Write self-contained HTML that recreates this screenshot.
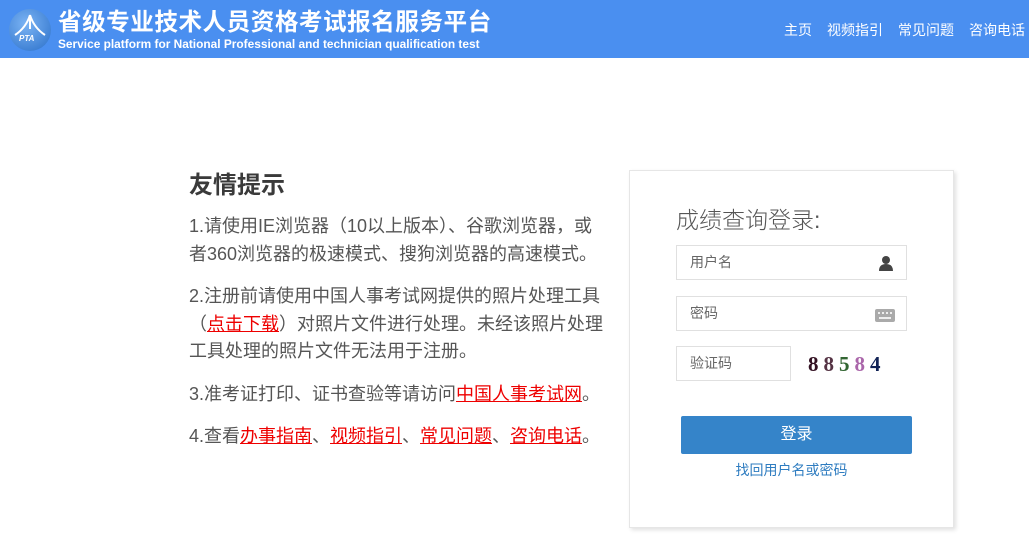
<!DOCTYPE html>
<html><head><meta charset="utf-8"><style>
*{margin:0;padding:0;box-sizing:border-box}
body{width:1029px;height:534px;overflow:hidden;background:#fff;font-family:"Liberation Sans","Noto Sans CJK SC",sans-serif;position:relative}
.hd{position:absolute;left:0;top:0;width:1029px;height:58px;background:#4a8ff0}
.logo{position:absolute;left:9px;top:9px;width:42px;height:42px;border-radius:50%;background:radial-gradient(circle at 40% 35%,#7bb4f4,#2a6fc9);}
.t1{position:absolute;left:58px;top:3px;color:#fff;font-size:23.6px;font-weight:bold;letter-spacing:0.5px;white-space:nowrap}
.t2{position:absolute;left:58px;top:37px;color:#fff;font-size:11.9px;font-weight:bold;white-space:nowrap}
.nav{position:absolute;top:20px;font-size:14px;color:#fff;white-space:nowrap}
.tip{position:absolute;left:189px;top:170px;width:440px;color:#444;white-space:nowrap}
.tip h2{font-size:24px;font-weight:bold;color:#3a3a3a;margin-bottom:11px;line-height:32px}
.tip p{font-size:18px;line-height:27.5px;margin-bottom:15px;color:#555}
.tip a{color:#e00;text-decoration:underline}
.box{position:absolute;left:629px;top:170px;width:325px;height:358px;border:1px solid #e6e6e6;box-shadow:2px 2px 4px rgba(0,0,0,.12);background:#fff}
.ttl{position:absolute;left:46px;top:30px;font-size:23px;color:#555;font-weight:300}
.in{position:absolute;border:1px solid #e0e0e0;height:35px;font-size:14px;color:#666;padding-left:13px;line-height:33px}
.btn{position:absolute;left:51px;top:245px;width:231px;height:38px;background:#3584c9;color:#fff;font-size:16px;text-align:center;line-height:38px;border-radius:2px}
.fg{position:absolute;left:0;width:100%;top:289px;text-align:center;font-size:14px;color:#2e7cc0}
.cap{position:absolute;left:178px;top:181px;font-family:"Liberation Serif",serif;font-size:21px;font-weight:bold;letter-spacing:5px}
</style></head><body>
<div class="hd">
<div class="logo"><svg width="42" height="42"><path d="M21 6 C18 16 12 22 6 26 M21 6 C24 16 30 22 36 26 M21 6 L21 20" stroke="#fff" stroke-width="2" fill="none"/><text x="10" y="32" font-size="8" fill="#fff" font-weight="bold" font-style="italic">PTA</text></svg></div>
<div class="t1">省级专业技术人员资格考试报名服务平台</div>
<div class="t2">Service platform for National Professional and technician qualification test</div>
<div class="nav" style="left:784px">主页</div>
<div class="nav" style="left:827px">视频指引</div>
<div class="nav" style="left:898px">常见问题</div>
<div class="nav" style="left:969px">咨询电话</div>
</div>
<div class="tip">
<h2>友情提示</h2>
<p>1.请使用IE浏览器（10以上版本）、谷歌浏览器，或<br>者360浏览器的极速模式、搜狗浏览器的高速模式。</p>
<p>2.注册前请使用中国人事考试网提供的照片处理工具<br>（<a>点击下载</a>）对照片文件进行处理。未经该照片处理<br>工具处理的照片文件无法用于注册。</p>
<p>3.准考证打印、证书查验等请访问<a>中国人事考试网</a>。</p>
<p>4.查看<a>办事指南</a>、<a>视频指引</a>、<a>常见问题</a>、<a>咨询电话</a>。</p>
</div>
<div class="box">
<div class="ttl">成绩查询登录:</div>
<div class="in" style="left:46px;top:74px;width:231px">用户名<svg style="position:absolute;right:12px;top:9px" width="16" height="16"><circle cx="8" cy="5" r="4" fill="#444"/><path d="M1 16 Q1 9 8 9 Q15 9 15 16Z" fill="#444"/></svg></div>
<div class="in" style="left:46px;top:125px;width:231px">密码<svg style="position:absolute;right:11px;top:10px" width="20" height="15"><rect x="0" y="2" width="20" height="13" rx="2" fill="#aaa"/><g fill="#eee"><rect x="3" y="5" width="2" height="2"/><rect x="7" y="5" width="2" height="2"/><rect x="11" y="5" width="2" height="2"/><rect x="15" y="5" width="2" height="2"/><rect x="4" y="10" width="12" height="2"/></g></svg></div>
<div class="in" style="left:46px;top:175px;width:115px">验证码</div>
<div class="cap"><span style="color:#312">8</span><span style="color:#534">8</span><span style="color:#363">5</span><span style="color:#a6a">8</span><span style="color:#125">4</span></div>
<div class="btn">登录</div>
<div class="fg">找回用户名或密码</div>
</div>
</body></html>
